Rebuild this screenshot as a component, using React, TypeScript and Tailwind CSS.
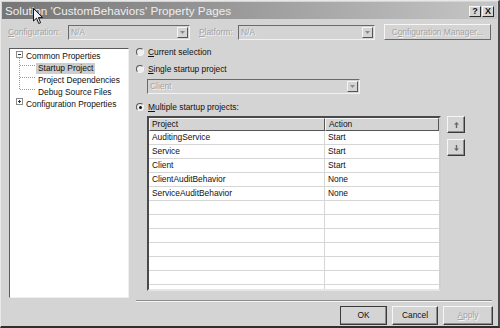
import React from 'react';

const rows = [
  ['AuditingService', 'Start'],
  ['Service', 'Start'],
  ['Client', 'Start'],
  ['ClientAuditBehavior', 'None'],
  ['ServiceAuditBehavior', 'None'],
  ['', ''],
  ['', ''],
  ['', ''],
  ['', ''],
  ['', ''],
  ['', ''],
  ['', ''],
];

const dis = 'text-[#a3a3a3] [text-shadow:1px_1px_0_#f4f4f4]';

const DropButton = () => (
  <div className="w-[11px] h-[11px] mr-[1px] flex items-center justify-center bg-[#d4d4d4] border border-t-[#f4f4f4] border-l-[#f4f4f4] border-b-[#555] border-r-[#555]">
    <svg width="5" height="3" viewBox="0 0 5 3">
      <path d="M0 0h5L2.5 3z" fill="#8a8a8a" />
    </svg>
  </div>
);

const Combo = ({ text, w }: { text: string; w: string }) => (
  <div className={`${w} h-[15px] flex items-center justify-between bg-[#d4d4d4] border border-t-[#6a6a6a] border-l-[#6a6a6a] border-b-[#f2f2f2] border-r-[#f2f2f2]`}>
    <span className={`pl-[2px] ${dis}`}>{text}</span>
    <DropButton />
  </div>
);

const Radio = ({ on }: { on?: boolean }) => (
  <div className="w-[8px] h-[8px] rounded-full flex items-center justify-center bg-[#efefef] border border-t-[#555] border-l-[#555] border-b-[#f6f6f6] border-r-[#f6f6f6]">
    {on && <div className="w-[3px] h-[3px] rounded-full bg-[#111]" />}
  </div>
);

const Btn = ({ children, w, disabled, def }: { children: React.ReactNode; w: string; disabled?: boolean; def?: boolean }) => (
  <div className={`${w} h-[19px] flex items-center justify-center bg-[#d4d4d4] border ${def ? 'border-[#3a3a3a]' : 'border-t-[#f6f6f6] border-l-[#f6f6f6] border-b-[#3a3a3a] border-r-[#3a3a3a]'} shadow-[inset_-1px_-1px_0_#8c8c8c] ${disabled ? dis : 'text-[#111]'}`}>
    {children}
  </div>
);

const ArrowBtn = ({ up }: { up?: boolean }) => (
  <div className="w-[18px] h-[17px] flex items-center justify-center bg-[#d4d4d4] border border-t-[#f6f6f6] border-l-[#f6f6f6] border-b-[#3a3a3a] border-r-[#3a3a3a] shadow-[inset_-1px_-1px_0_#8c8c8c]">
    <svg width="5" height="6" viewBox="0 0 5 6">
      {up ? <path d="M2.5 0L5 2.5H3.2V6H1.8V2.5H0z" fill="#666" /> : <path d="M2.5 6L5 3.5H3.2V0H1.8V3.5H0z" fill="#666" />}
    </svg>
  </div>
);

export default function App() {
  return (
    <div className="relative w-[500px] h-[328px] bg-[#d4d4d4] border-t border-l border-t-[#e8e8e8] border-l-[#e8e8e8] border-b-2 border-r-2 border-b-[#2e2e2e] border-r-[#4a4a4a] flex flex-col font-['Liberation_Sans',Arial,sans-serif] text-[8.4px] text-[#111] leading-none overflow-hidden">
      {/* title bar */}
      <div className="mx-[1px] mt-[1px] h-[17px] shrink-0 flex items-center justify-between pl-[3px] pr-[3px] bg-gradient-to-r from-[#767676] via-[#9c9c9c] to-[#c6c6c6]">
        <span className="text-[11.7px] text-[#eeeeee]">Solution 'CustomBehaviors' Property Pages</span>
        <div className="flex mt-[2px]">
          <div className="w-[12px] h-[11px] flex items-center justify-center bg-[#d4d4d4] border border-t-[#f6f6f6] border-l-[#f6f6f6] border-b-[#2a2a2a] border-r-[#2a2a2a] text-[9px] font-bold">?</div>
          <div className="w-[12px] h-[11px] ml-[1px] flex items-center justify-center bg-[#d4d4d4] border border-t-[#f6f6f6] border-l-[#f6f6f6] border-b-[#2a2a2a] border-r-[#2a2a2a] text-[9px] font-bold">X</div>
        </div>
      </div>

      {/* configuration row */}
      <div className="mt-[5px] h-[16px] shrink-0 flex items-center pl-[7px]">
        <span className={`w-[60px] ${dis}`}><span className="underline">C</span>onfiguration:</span>
        <Combo text="N/A" w="w-[122px]" />
        <span className={`ml-[9px] w-[39px] ${dis}`}><span className="underline">P</span>latform:</span>
        <Combo text="N/A" w="w-[137px]" />
        <div className="ml-[9px] w-[107px] h-[16px] flex items-center justify-center bg-[#d4d4d4] border border-t-[#f6f6f6] border-l-[#f6f6f6] border-b-[#6a6a6a] border-r-[#6a6a6a]">
          <span className={dis}>C<span className="underline">o</span>nfiguration Manager...</span>
        </div>
      </div>

      {/* main */}
      <div className="mt-[6px] flex">
        {/* tree */}
        <div className="relative ml-[8px] mt-[2px] w-[120px] h-[250px] bg-white border border-t-[#5a5a5a] border-l-[#5a5a5a] border-b-[#efefef] border-r-[#efefef] pt-[1px]">
          <svg className="absolute left-0 top-0" width="40" height="60">
            <rect x="6.5" y="2.5" width="6" height="6" fill="#fff" stroke="#8a8a8a" />
            <path d="M8 5.5h3" stroke="#333" />
            <path d="M9.5 9v31M10 16.5h16M10 28.5h16M10 40.5h16" stroke="#9a9a9a" strokeDasharray="1 1" />
            <rect x="6.5" y="49.5" width="6" height="6" fill="#fff" stroke="#8a8a8a" />
            <path d="M8 52.5h3M9.5 51v3" stroke="#333" />
          </svg>
          <div className="h-[12px] flex items-center pl-[16px]">Common Properties</div>
          <div className="h-[12px] flex items-center pl-[26px]">
            <span className="h-[11px] flex items-center px-[2px] bg-[#cdcdcd]">Startup Project</span>
          </div>
          <div className="h-[12px] flex items-center pl-[28px]">Project Dependencies</div>
          <div className="h-[12px] flex items-center pl-[28px]">Debug Source Files</div>
          <div className="h-[12px] flex items-center pl-[16px]">Configuration Properties</div>
        </div>

        {/* right column */}
        <div className="ml-[7px] w-[356px] flex flex-col">
          <div className="h-[12px] flex items-center">
            <Radio />
            <span className="ml-[4px]"><span className="underline">C</span>urrent selection</span>
          </div>
          <div className="mt-[5px] h-[12px] flex items-center">
            <Radio />
            <span className="ml-[4px]"><span className="underline">S</span>ingle startup project</span>
          </div>
          <div className="mt-[4px] ml-[11px]">
            <Combo text="Client" w="w-[213px]" />
          </div>
          <div className="mt-[7px] h-[12px] flex items-center">
            <Radio on />
            <span className="ml-[4px]"><span className="underline">M</span>ultiple startup projects:</span>
          </div>
          <div className="mt-[3px] ml-[11px] flex">
            <div className="w-[294px] h-[175px] bg-white border-2 border-t-[#4a4a4a] border-l-[#4a4a4a] border-b-[#e6e6e6] border-r-[#d0d0d0] overflow-hidden">
              <div className="h-[13px] flex bg-[#d4d4d4]">
                <div className="w-[176px] flex items-center pl-[2px] border border-t-[#f6f6f6] border-l-[#f6f6f6] border-b-[#555] border-r-[#555]">Project</div>
                <div className="flex-1 flex items-center pl-[3px] border border-t-[#f6f6f6] border-l-[#f6f6f6] border-b-[#555] border-r-[#555]">Action</div>
              </div>
              {rows.map((r, i) => (
                <div key={i} className="h-[14px] flex border-b border-[#d6d6d6]">
                  <div className="w-[176px] flex items-center pl-[3px] border-r border-[#d6d6d6]">{r[0]}</div>
                  <div className="flex-1 flex items-center pl-[3px]">{r[1]}</div>
                </div>
              ))}
            </div>
            <div className="ml-[6px] flex flex-col">
              <ArrowBtn up />
              <div className="mt-[6px]">
                <ArrowBtn />
              </div>
            </div>
          </div>
          <div className="mt-[9px] h-[2px] border-t border-t-[#8c8c8c] border-b border-b-[#f4f4f4]" />
        </div>
      </div>

      {/* bottom buttons */}
      <div className="mt-[4px] flex justify-end pr-[5px] gap-[5px]">
        <Btn w="w-[47px]" def>OK</Btn>
        <Btn w="w-[46px]">Cancel</Btn>
        <Btn w="w-[50px]" disabled><span className="underline">A</span>pply</Btn>
      </div>

      {/* mouse cursor */}
      <svg className="absolute left-[32px] top-[7px]" width="11" height="17" viewBox="0 0 11 17">
        <path d="M0.5 0.5V13L3.5 10.2L5.7 15.5L7.6 14.7L5.4 9.6H9.5Z" fill="#f2f2f2" stroke="#111" strokeWidth="1" />
      </svg>
    </div>
  );
}
